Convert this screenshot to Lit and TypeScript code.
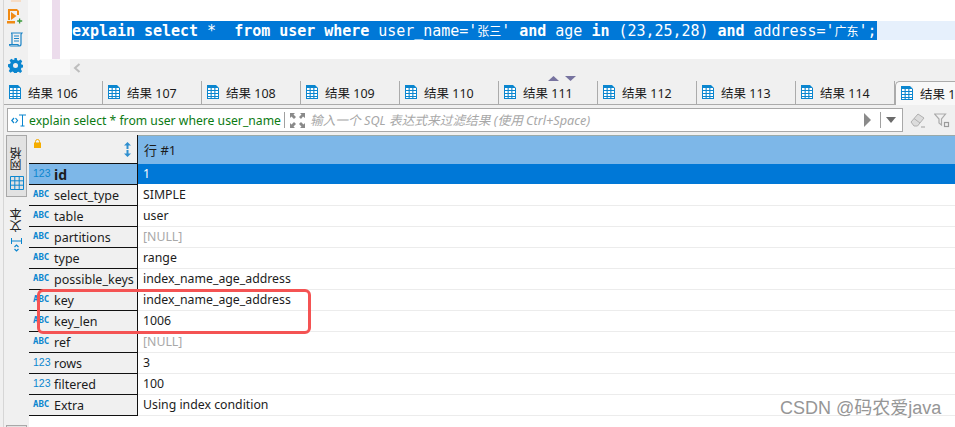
import { LitElement, html, css, svg } from "lit";
import { customElement } from "lit/decorators.js";

const gridIcon = svg`<svg class="gi" width="12" height="14" viewBox="0 0 12 14"><rect width="12" height="14" fill="#0b86cf"/><g fill="#fff"><rect x="1" y="3" width="2.6" height="2"/><rect x="4.7" y="3" width="2.6" height="2"/><rect x="8.4" y="3" width="2.6" height="2"/><rect x="1" y="6" width="2.6" height="2"/><rect x="4.7" y="6" width="2.6" height="2"/><rect x="8.4" y="6" width="2.6" height="2"/><rect x="1" y="9" width="2.6" height="2"/><rect x="4.7" y="9" width="2.6" height="2"/><rect x="8.4" y="9" width="2.6" height="2"/><rect x="1" y="12" width="2.6" height="1"/><rect x="4.7" y="12" width="2.6" height="1"/><rect x="8.4" y="12" width="2.6" height="1"/></g><path d="M9 0h3v3z" fill="#f0f0f0"/></svg>`;

const rows: [string, string, string, string?][] = [
  ["num", "id", "1", "sel"],
  ["abc", "select_type", "SIMPLE"],
  ["abc", "table", "user"],
  ["abc", "partitions", "[NULL]", "null"],
  ["abc", "type", "range"],
  ["abc", "possible_keys", "index_name_age_address"],
  ["abc", "key", "index_name_age_address"],
  ["abc", "key_len", "1006"],
  ["abc", "ref", "[NULL]", "null"],
  ["num", "rows", "3"],
  ["num", "filtered", "100"],
  ["abc", "Extra", "Using index condition"],
];

const tabs = [106, 107, 108, 109, 110, 111, 112, 113, 114];

@customElement("app-root")
export class AppRoot extends LitElement {
  static styles = css`
    :host { display: block; width: 955px; height: 427px; overflow: hidden; position: relative; background: #f0f0f0;
      font-family: "Noto Sans", "Noto Sans CJK SC", sans-serif; font-size: 12.5px; color: #1c1c1c; }
    .app { display: flex; height: 427px; }
    .sliver { width: 3px; border-right: 1px solid #d6d6d6; flex: none; }
    .main { flex: 1; min-width: 0; display: flex; flex-direction: column; }

    .top { display: grid; grid-template-columns: 24px 12px 12px 8px 10px 1fr; grid-template-rows: 59px 22px; height: 81px; flex: none; }
    .tools { grid-row: 1 / 3; display: flex; flex-direction: column; align-items: center; position: relative; }
    .tools svg { display: block; flex: none; }
    .tools .a { margin-top: 7px; margin-right: 2px; }
    .tools .b { margin-top: 8px; margin-right: 1px; }
    .tools .c { margin-top: 11px; margin-right: 2px; }
    .tools .peek { width: 10px; height: 2px; background: #f6dcc4; }
    .g0 { background: #f8f8f8; }
    .g1, .g3 { background: #fff; }
    .g2 { background: #ecdcec; }
    .foot { grid-column: 2 / 6; height: 16px; background: #f8f8f8; }
    .code { background: #fff; padding: 21px 0 0 2px; box-sizing: border-box; }
    .line { height: 19px; background: #e6f0fc; line-height: 19px; }
    .selected { display: inline-block; height: 19px; background: #0078d7; color: #fff; white-space: pre; vertical-align: top;
      font-family: "DejaVu Sans Mono", monospace; font-size: 15px; line-height: 20px; letter-spacing: -0.025px; }
    .selected b { font-weight: 700; }
    .selected i { font-style: normal; font-size: 12px; font-family: "Noto Sans CJK SC", sans-serif; }
    .hs { padding: 0 0 0 3px; position: relative; }
    .hs .chev { display: block; margin-top: 4px; }
    .updown { position: absolute; left: 478px; top: 17px; display: flex; gap: 6px; }

    .tabs { display: flex; height: 24px; flex: none; overflow: hidden; }
    .tab { flex: none; width: 99px; height: 24px; box-sizing: border-box; border-right: 1px solid #ababab; border-bottom: 1px solid #ababab;
      display: flex; align-items: center; padding-left: 5px; gap: 7px; white-space: nowrap; }
    .tab.active { width: 60px; background: #f8f8f8; border-right: none; border-bottom: none; border-left: 1px solid #ababab; border-top: 1px solid #ababab; border-top-left-radius: 5px; padding-left: 5px; }
    .tab .gi { flex: none; margin-top: -2px; }
    .tab span { margin-top: -1px; }

    .filterrow { display: flex; align-items: center; height: 30px; flex: none; padding-left: 3px; box-sizing: border-box; }
    .filter { width: 896px; height: 24px; box-sizing: border-box; border: 1px solid #a8a8a8; background: #fff; display: flex; align-items: center; flex: none; }
    .sqlicon { flex: none; margin-left: 3px; }
    .sql { color: #0b7a12; width: 255px; margin-left: 3px; white-space: nowrap; font-size: 12.2px; flex: none; }
    .div { width: 1px; height: 16px; background: #a0a0a0; flex: none; }
    .expand { flex: none; margin: 0 5px 0 5px; }
    .ph { color: #a8a8a8; font-style: italic; white-space: nowrap; flex: 1; font-size: 12.7px; margin-top: -2px; }
    .play { flex: none; margin-right: 9px; }
    .drop { flex: none; margin: 0 6px 0 5px; }
    .erase { flex: none; margin-left: 7px; }
    .funnel { flex: none; margin-left: 8px; }

    .body { flex: 1; display: flex; min-height: 0; }
    .rail { width: 25px; flex: none; display: flex; flex-direction: column; align-items: center; position: relative; }
    .rtab { width: 21px; box-sizing: border-box; display: flex; flex-direction: column; align-items: center; }
    .rtab.on { height: 62px; border: 1px solid #a8a8a8; background: #e2e2e2; padding-top: 11px; gap: 5px; }
    .rtab.off { margin-top: 11px; gap: 5px; }
    .vt { writing-mode: vertical-rl; transform: rotate(180deg); font-size: 12px; line-height: 12px; height: 24px; color: #222; }
    .stub { position: absolute; left: 2px; top: 290px; width: 21px; height: 4px; border: 1px solid #a8a8a8; box-sizing: border-box; background: #e2e2e2; }

    .grid { flex: 1; min-width: 0; display: grid; grid-template-columns: 109px 1fr; grid-auto-rows: 21px; grid-template-rows: 29px; align-content: start; background: #fff; }
    .corner { background: #f0f0f0; border-right: 1px solid #111; border-bottom: 1px solid #111; box-sizing: border-box; position: relative; display: flex; justify-content: space-between; padding: 4px 6px 0 5px; }
    .colhead { background: #7db7e8; border-top: 1px solid #9aa; box-sizing: border-box; padding: 0 0 2px 6px; display: flex; align-items: center; font-size: 13px; }
    .lab { background: #f0f0f0; border-right: 1px solid #111; border-bottom: 1px solid #111; box-sizing: border-box; display: flex; align-items: center; padding-left: 4px; white-space: nowrap; font-size: 12.5px; }
    .lab.sel { background: #7db7e8; }
    .lab.sel .nm { font-weight: 700; font-size: 14px; }
    .nm { margin-left: 5px; }
    .ty { width: 16px; flex: none; color: #0b86cf; text-align: left; margin-top: -3px; }
    .ty.abc { font: 700 9px/12px "DejaVu Sans Mono", monospace; }
    .ty.num { font: 10.5px/14px "Liberation Sans", sans-serif; }
    .val { border-bottom: 1px solid #ececec; box-sizing: border-box; display: flex; align-items: center; padding-left: 5px; font-size: 12.3px; white-space: nowrap; padding-bottom: 2px; }
    .val.sel { background: #0078d7; color: #fff; border-bottom: 1px solid #fff; }
    .val.null { color: #a8a8a8; }

    .mark { position: absolute; left: 37px; top: 289px; width: 274px; height: 45px; box-sizing: border-box; border: 3px solid #f45353; border-radius: 6px; pointer-events: none; }
    .wm { position: absolute; left: 780px; top: 398px; color: #969696; font: 18px/20px "Liberation Sans", "Noto Sans CJK SC", sans-serif; white-space: nowrap; }
  `;

  render() {
    return html`<div class="app">
      <div class="sliver"></div>
      <div class="main">
        <div class="top">
          <div class="tools">
            <div class="peek"></div>
            <svg class="a" width="16" height="15" viewBox="0 0 16 15"><path d="M1 0h9l2 2v4h-2V2H3v9H1zM0 12h8v2.4H0z" fill="#f08a12"/><path d="M4 3l5.5 4L4 11z" fill="#f08a12"/><path d="M12.6 9.5v5M10.2 12h5" stroke="#3c9a3c" stroke-width="1.3" fill="none"/></svg>
            <svg class="b" width="14" height="15" viewBox="0 0 14 15"><path d="M3 1h10l-1 1.5V12c0 1.3-.8 2-2 2H2c-1 0-1.5-.6-1.5-1.5h8.500c0 1 .6 1.500 1.500 1.500M3 12V2.500C3 1.500 2.500 1 2 1h2" fill="none" stroke="#1c84c6" stroke-width="1.200"/><path d="M5 4h5M5 6.500h5M5 9h5" stroke="#1c84c6" stroke-width="1.200"/></svg>
            <svg class="c" width="15" height="15" viewBox="0 0 24 24"><path fill="#0b86cf" fill-rule="evenodd" d="M10 0h4l.7 3.400 2.300 1 3-1.900 2.800 2.800-1.900 3 1 2.300 3.100.4v4l-3.400.7-1 2.300 1.900 3-2.800 2.800-3-1.900-2.300 1-.4 3.100h-4l-.7-3.400-2.300-1-3 1.900-2.800-2.800 1.900-3-1-2.300L0 14v-4l3.400-.7 1-2.300-1.900-3 2.800-2.800 3 1.900 2.300-1zM12 8a4 4 0 100 8 4 4 0 000-8z"/></svg>
          </div>
          <div class="g0"></div><div class="g1"></div><div class="g2"></div><div class="g3"></div>
          <div class="code"><div class="line"><span class="selected"><b>explain</b> <b>select</b> *  <b>from</b> <b>user</b> <b>where</b> user_name='<i>张三</i>' <b>and</b> age <b>in</b> (23,25,28) <b>and</b> address='<i>广东</i>';</span></div></div>
          <div class="foot"></div>
          <div class="hs">
            <svg class="chev" width="8" height="10" viewBox="0 0 8 10"><path d="M6.500 1L2 5l4.500 4" fill="none" stroke="#bdbdbd" stroke-width="2"/></svg>
            <div class="updown">
              <svg width="11" height="5" viewBox="0 0 11 5"><path d="M5.500 0L11 5H0z" fill="#77739f"/></svg>
              <svg width="11" height="5" viewBox="0 0 11 5"><path d="M0 0h11L5.500 5z" fill="#77739f"/></svg>
            </div>
          </div>
        </div>

        <div class="tabs">
          ${tabs.map((n) => html`<div class="tab">${gridIcon}<span>结果 ${n}</span></div>`)}
          <div class="tab active">${gridIcon}<span>结果 1</span></div>
        </div>

        <div class="filterrow">
          <div class="filter">
            <svg class="sqlicon" width="15" height="13" viewBox="0 0 15 13"><path d="M3 4L.8 6.500 3 9M4.500 4l2 2.500-2 2.500" fill="none" stroke="#0b86cf" stroke-width="1.200"/><path d="M8 1h7M11.500 1v11M9.500 12h4" stroke="#0b86cf" stroke-width="1" fill="none"/></svg>
            <div class="sql">explain select * from user where user_name</div>
            <div class="div"></div>
            <svg class="expand" width="15" height="15" viewBox="0 0 15 15"><path d="M0 5V0h5L3.500 1.500 6 4 4 6 1.500 3.500zM15 5V0h-5l1.500 1.500L9 4l2 2 2-2.500zM0 10v5h5l-1.500-1.500L6 11 4 9l-2.500 2.500zM15 10v5h-5l1.500-1.500L9 11l2-2 2.500 2.500z" fill="#8a8a8a"/></svg>
            <div class="ph">输入一个 SQL 表达式来过滤结果 (使用 Ctrl+Space)</div>
            <svg class="play" width="7" height="14" viewBox="0 0 7 14"><path d="M0 0l7 7-7 7z" fill="#8a8a8a"/></svg>
            <div class="div"></div>
            <svg class="drop" width="10" height="6" viewBox="0 0 10 6"><path d="M0 0h10L5 6z" fill="#6b6b6b"/></svg>
          </div>
          <svg class="erase" width="16" height="15" viewBox="0 0 16 15"><path d="M1 9l7-8 6 4-6.500 8H4z" fill="#dcdcdc" stroke="#b0b0b0"/><path d="M4 5.500l6 4.500" stroke="#b0b0b0"/><path d="M11 14h4" stroke="#a0a0a0"/></svg>
          <svg class="funnel" width="16" height="15" viewBox="0 0 16 15"><path d="M.5 1h11L7.500 6v6L5 10V6z" fill="none" stroke="#ababab" stroke-width="1.200"/><rect x="10.500" y="9.500" width="4" height="4" fill="none" stroke="#9a9a9a" stroke-width="1.200"/></svg>
        </div>

        <div class="body">
          <div class="rail">
            <div class="rtab on">
              <div class="vt">网格</div>
              <svg width="14" height="14" viewBox="0 0 14 14"><path d="M.5.500h13v13H.500zM.5 4.800h13M.5 9.200h13M4.800.500v13M9.200.500v13" fill="none" stroke="#0b86cf"/></svg>
            </div>
            <div class="rtab off">
              <div class="vt">文本</div>
              <svg width="11" height="15" viewBox="0 0 11 15"><path d="M.5 1v6M.5 4h10M10.500 1v6" fill="none" stroke="#0b86cf"/><path d="M3.500 10l2-2 2 2M3.500 12l2 2 2-2" fill="none" stroke="#0b86cf" stroke-width="1.200"/></svg>
            </div>
            <div class="stub"></div>
          </div>
          <div class="grid">
            <div class="corner">
              <svg width="7" height="9" viewBox="0 0 7 9"><path d="M1.500 4V2.500a2 2 0 014 0V4" fill="none" stroke="#f2a900"/><rect y="3.500" width="7" height="5.500" fill="#f5ad00"/></svg>
              <svg width="7" height="15" viewBox="0 0 7 15" style="margin-top:3px"><path d="M3.500 0L7 3.500H4.500V7h-2V3.500H0zM3.500 15L0 11.500h2.500V8h2v3.500H7z" fill="#2f8fcf"/></svg>
            </div>
            <div class="colhead">行 #1</div>
            ${rows.map(([t, name, value, kind]) => html`
              <div class="lab ${kind === "sel" ? "sel" : ""}">
                <span class="ty ${t}">${t === "abc" ? "ABC" : "123"}</span><span class="nm">${name}</span>
              </div>
              <div class="val ${kind ?? ""}">${value}</div>
            `)}
          </div>
        </div>
      </div>
      <div class="mark"></div>
      <div class="wm">CSDN @码农爱java</div>
    </div>`;
  }
}
